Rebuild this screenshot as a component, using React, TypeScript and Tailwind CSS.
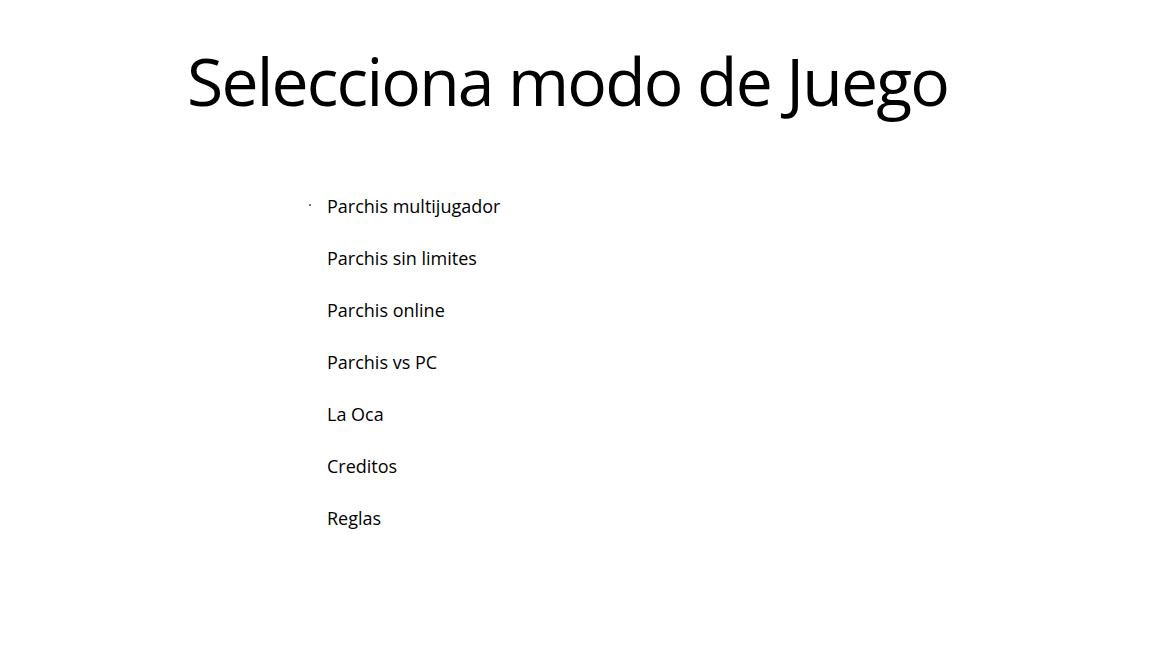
import React from "react";

const items = [
  "Parchis multijugador",
  "Parchis sin limites",
  "Parchis online",
  "Parchis vs PC",
  "La Oca",
  "Creditos",
  "Reglas",
];

export default function App() {
  return (
    <div
      className="w-[1152px] h-[648px] bg-white text-black overflow-hidden"
      style={{ fontFamily: '"Open Sans", "Noto Sans", sans-serif' }}
    >
      <h1 className="pt-[35px] pl-[187px] text-[66px] leading-[90px] font-normal tracking-[-1.8px]">
        Selecciona modo de Juego
      </h1>
      <ul className="mt-[66px] pl-[327px] flex flex-col">
        {items.map((t, i) => (
          <li key={t} className="relative h-[52px] text-[18px] leading-[30px]">
            {i === 0 && (
              <span className="absolute left-[-18px] top-[13px] w-[2px] h-[2px] bg-gray-500" />
            )}
            {t}
          </li>
        ))}
      </ul>
    </div>
  );
}
